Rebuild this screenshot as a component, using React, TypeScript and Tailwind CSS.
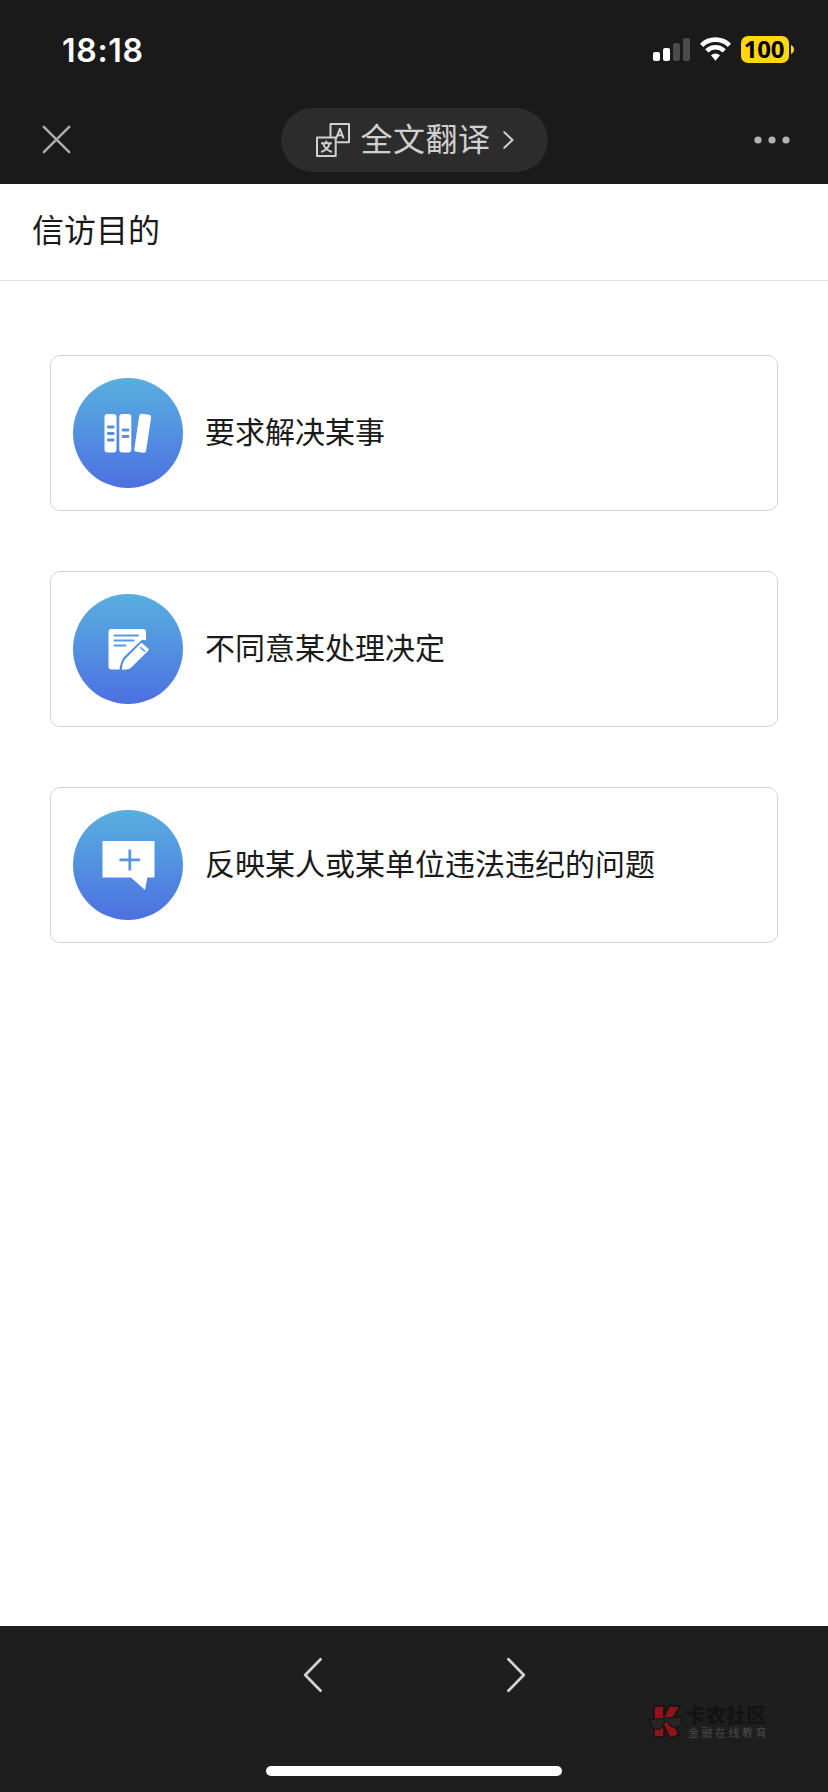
import React from "react";

const cjk = "font-['Noto_Sans_CJK_SC',sans-serif]";

function StatusBar() {
  return (
    <div className="flex h-24 items-start justify-between pr-[34px] pl-[62px]">
      <span className="mt-[30px] font-['Inter',sans-serif] text-[32px] leading-[41px] font-semibold tracking-[0.7px] text-white">
        18:18
      </span>
      <div className="mt-9 flex items-start">
        <svg width="37" height="27" viewBox="0 0 37 27">
          <rect x="0" y="16" width="7" height="9" rx="2" fill="#fff" />
          <rect x="10" y="12" width="7" height="13" rx="2" fill="#fff" />
          <rect x="20" y="7" width="7" height="18" rx="2" fill="#4b4b4b" />
          <rect x="30" y="2" width="7" height="23" rx="2" fill="#4b4b4b" />
        </svg>
        <svg className="ml-[10px]" width="31" height="27" viewBox="0 0 31 27" fill="none" stroke="#fff">
          <path d="M1.6 9.3A19.8 19.8 0 0 1 29.4 9.3" strokeWidth="4.6" />
          <path d="M6.8 14.9A12.3 12.3 0 0 1 24.2 14.9" strokeWidth="4.6" />
          <path d="M11 19.2A6.5 6.5 0 0 1 20 19.2L15.5 24.8Z" fill="#fff" stroke="none" />
        </svg>
        <div className="ml-[10px] flex h-[27px] w-12 items-center justify-center rounded-[7px] bg-[#ffd60f] pr-[2px] pb-[2px] font-['Open_Sans',sans-serif] text-[24px] leading-[25px] font-bold tracking-[-0.3px] text-black">
          100
        </div>
        <svg className="mt-[9px] ml-[2px]" width="3" height="9" viewBox="0 0 3 9">
          <path d="M0 0Q3 1.5 3 4.5T0 9Z" fill="#ffd60f" />
        </svg>
      </div>
    </div>
  );
}

function NavBar() {
  return (
    <div className="flex h-[88px] items-start justify-between pr-[38px] pl-[42px]">
      <svg className="mt-[29px]" width="29" height="29" viewBox="0 0 29 29" stroke="#adadad" strokeWidth="2.5" strokeLinecap="round">
        <path d="M1.8 1.8L27.2 27.2M27.2 1.8L1.8 27.2" />
      </svg>
      <div className="mt-3 ml-[3px] flex h-16 w-[267px] items-center rounded-full bg-[#2c2c2c] pl-[35px]">
        <svg width="34" height="34" viewBox="0 0 34 34" fill="none" stroke="#d0d0d0" strokeWidth="2" strokeLinejoin="round">
          <path d="M14.5 14V1H33V19.3H20.5" />
          <rect x="1" y="14.5" width="18.7" height="18.5" />
          <path d="M20.2 15.3L23.9 5.8L27.6 15.3M21.5 12.2H26.3" />
          <path d="M5 20.2H15.8M10.3 17.7V20.2M13.8 20.2Q12 26.5 5.2 29M7 20.2Q9 26.5 15.8 29" />
        </svg>
        <span className={`${cjk} -mt-[7px] ml-[11px] text-[32px] leading-[48px] tracking-[0.5px] whitespace-nowrap text-[#d0d0d0]`}>
          全文翻译
        </span>
        <svg className="ml-[12px]" width="11" height="18" viewBox="0 0 11 18" fill="none" stroke="#d0d0d0" strokeWidth="2" strokeLinecap="round" strokeLinejoin="round">
          <path d="M1.3 1.3L9.5 9L1.3 16.7" />
        </svg>
      </div>
      <svg className="mt-10" width="36" height="8" viewBox="0 0 36 8" fill="#b3b3b3">
        <circle cx="4" cy="4" r="3.6" />
        <circle cx="18" cy="4" r="3.6" />
        <circle cx="32" cy="4" r="3.6" />
      </svg>
    </div>
  );
}

function BooksIcon() {
  return (
    <svg width="110" height="110" viewBox="0 0 110 110">
      <rect x="31.5" y="36" width="12" height="38.5" rx="3" fill="#fff" />
      <rect x="46.3" y="36" width="12" height="38.5" rx="3" fill="#fff" />
      <rect x="63.7" y="36" width="12" height="38.5" rx="2.6" fill="#fff" transform="rotate(8.5 69.7 55.2)" />
      <path d="M35.3 49H40.2M35.3 55.5H40.2M35.3 62H40.2M50 52H55M50 58.5H55" stroke="#5391de" strokeWidth="2.8" strokeLinecap="round" />
    </svg>
  );
}

function NoteIcon() {
  return (
    <svg width="110" height="110" viewBox="0 0 110 110">
      <path d="M38.5 35H70Q73 35 73 38V46.5Q70 45 67.5 47L51 63Q47.5 67.5 46.5 75.5H38.5Q35.5 75.5 35.5 72.5V38Q35.5 35 38.5 35Z" fill="#fff" />
      <path d="M41.5 41.5H65M41.5 46.5H60.5M41.5 51.5H52.5" stroke="#559bdd" strokeWidth="2" strokeLinecap="round" />
      <path d="M69.3 49.2L75.5 54.8Q76.3 55.6 75.4 56.6L58.5 73.3Q56.5 75.5 53 75.6L48.8 75.8Q49.2 68.2 52.7 64.5L67.5 49.5Q68.5 48.5 69.3 49.2Z" fill="#fff" />
      <path d="M67.3 53.2L72 57.6" stroke="#528ade" strokeWidth="1.4" />
    </svg>
  );
}

function ReportIcon() {
  return (
    <svg width="110" height="110" viewBox="0 0 110 110">
      <path d="M29.5 31H81.5V67.5H74.3L72 80L58 67.5H29.5Z" fill="#fff" />
      <path d="M56.8 39.5V60.5M46.5 49.8H67" stroke="#5596dd" strokeWidth="2.7" />
    </svg>
  );
}

const options = [
  { label: "要求解决某事", Icon: BooksIcon },
  { label: "不同意某处理决定", Icon: NoteIcon },
  { label: "反映某人或某单位违法违纪的问题", Icon: ReportIcon },
];

function Watermark() {
  return (
    <div className="absolute top-[76px] left-[648px] flex">
      <svg width="36" height="40" viewBox="0 0 36 40">
        <path d="M6 4H16V15L21 4H32L24 18L31 33L22 36L16 24V35H6Z" fill="#8e1418" stroke="#121212" strokeWidth="1.5" />
        <path d="M1 17.5L16 16.5L19 16L34 14.5Q34 25 27 25.5Q21 25 19.5 19.5H16.5Q15.5 27.5 9 27.5Q3 27 2.5 19.5Z" fill="#262626" stroke="#101010" strokeWidth="1" />
      </svg>
      <div className={`${cjk} ml-px flex flex-col whitespace-nowrap`}>
        <span className="text-[20px] leading-[25px] font-black tracking-[0.4px] text-[#131313]">卡农社区</span>
        <span className="ml-[3px] text-[11px] leading-[11px] tracking-[2.5px] text-[#4a4a4a]">金融在线教育</span>
      </div>
    </div>
  );
}

export default function App() {
  return (
    <div className="flex h-[1792px] w-[828px] flex-col overflow-hidden bg-white">
      <header className="h-[184px] shrink-0 bg-[#1a1a1a]">
        <StatusBar />
        <NavBar />
      </header>
      <div className="flex h-[97px] shrink-0 items-center border-b border-[#dedede] pb-[8px] pl-8">
        <h1 className={`${cjk} text-[32px] leading-[48px] text-[#1a1a1a]`}>信访目的</h1>
      </div>
      <main className="flex grow flex-col gap-[60px] px-[50px] pt-[74px]">
        {options.map(({ label, Icon }) => (
          <button key={label} className="flex h-[156px] items-center rounded-[10px] border border-[#d4d5d6] pl-[22px] text-left">
            <span className="size-[110px] rounded-full bg-linear-to-b from-[#5aafdf] to-[#4d6fe1]">
              <Icon />
            </span>
            <span className={`${cjk} ml-[22px] pb-[6px] text-[30px] leading-[44px] text-[#1a1a1a]`}>{label}</span>
          </button>
        ))}
      </main>
      <footer className="relative flex h-[166px] shrink-0 flex-col items-center justify-between bg-[#1e1e1e] pt-[31px] pb-4">
        <div className="flex gap-[183px]">
          <svg width="20" height="36" viewBox="0 0 20 36" fill="none" stroke="#d2d2d2" strokeWidth="2.7" strokeLinecap="round" strokeLinejoin="round">
            <path d="M17.6 2.2L2.2 18L17.6 33.8" />
          </svg>
          <svg width="20" height="36" viewBox="0 0 20 36" fill="none" stroke="#d2d2d2" strokeWidth="2.7" strokeLinecap="round" strokeLinejoin="round">
            <path d="M2.4 2.2L17.8 18L2.4 33.8" />
          </svg>
        </div>
        <div className="h-[10px] w-[296px] rounded-full bg-white" />
        <Watermark />
      </footer>
    </div>
  );
}
